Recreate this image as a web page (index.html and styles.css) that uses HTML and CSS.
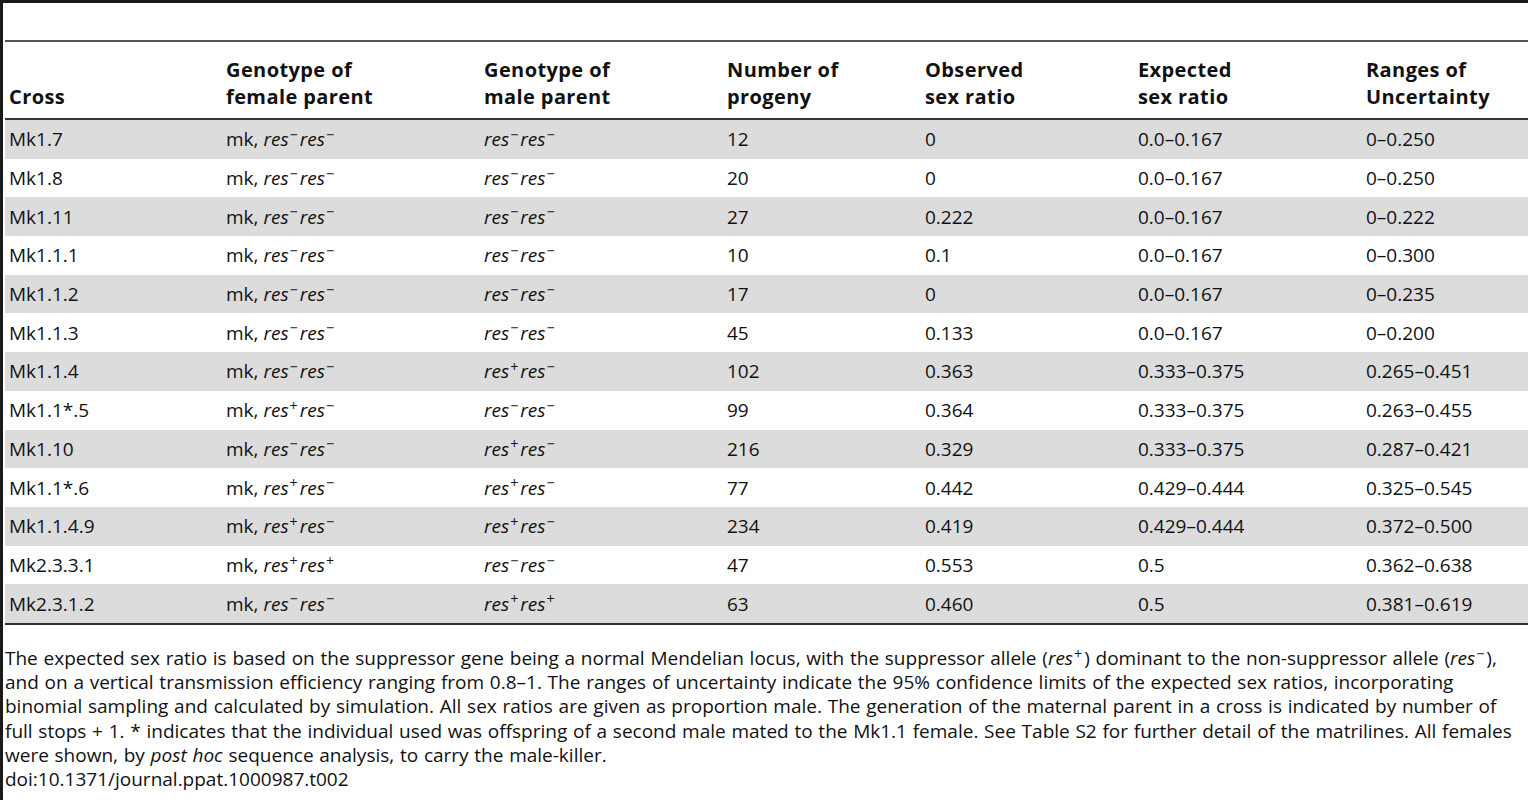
FILE: index.html
```html
<!DOCTYPE html>
<html lang="en">
<head>
  <meta charset="UTF-8" />
  <title>Table 2</title>
  <link rel="stylesheet" href="styles.css">
</head>
<body>
  <div class="frame">
    <table class="data">
      <colgroup>
        <col class="c1"><col class="c2"><col class="c3"><col class="c4"><col class="c5"><col class="c6"><col class="c7">
      </colgroup>
      <thead>
        <tr>
          <th>Cross</th>
          <th>Genotype of<br>female parent</th>
          <th>Genotype of<br>male parent</th>
          <th>Number of<br>progeny</th>
          <th>Observed<br>sex ratio</th>
          <th>Expected<br>sex ratio</th>
          <th>Ranges of<br>Uncertainty</th>
        </tr>
      </thead>
      <tbody>
        <tr><td>Mk1.7</td><td>mk, <i>res</i><sup>−</sup><i>res</i><sup>−</sup></td><td><i>res</i><sup>−</sup><i>res</i><sup>−</sup></td><td>12</td><td>0</td><td>0.0–0.167</td><td>0–0.250</td></tr>
        <tr><td>Mk1.8</td><td>mk, <i>res</i><sup>−</sup><i>res</i><sup>−</sup></td><td><i>res</i><sup>−</sup><i>res</i><sup>−</sup></td><td>20</td><td>0</td><td>0.0–0.167</td><td>0–0.250</td></tr>
        <tr><td>Mk1.11</td><td>mk, <i>res</i><sup>−</sup><i>res</i><sup>−</sup></td><td><i>res</i><sup>−</sup><i>res</i><sup>−</sup></td><td>27</td><td>0.222</td><td>0.0–0.167</td><td>0–0.222</td></tr>
        <tr><td>Mk1.1.1</td><td>mk, <i>res</i><sup>−</sup><i>res</i><sup>−</sup></td><td><i>res</i><sup>−</sup><i>res</i><sup>−</sup></td><td>10</td><td>0.1</td><td>0.0–0.167</td><td>0–0.300</td></tr>
        <tr><td>Mk1.1.2</td><td>mk, <i>res</i><sup>−</sup><i>res</i><sup>−</sup></td><td><i>res</i><sup>−</sup><i>res</i><sup>−</sup></td><td>17</td><td>0</td><td>0.0–0.167</td><td>0–0.235</td></tr>
        <tr><td>Mk1.1.3</td><td>mk, <i>res</i><sup>−</sup><i>res</i><sup>−</sup></td><td><i>res</i><sup>−</sup><i>res</i><sup>−</sup></td><td>45</td><td>0.133</td><td>0.0–0.167</td><td>0–0.200</td></tr>
        <tr><td>Mk1.1.4</td><td>mk, <i>res</i><sup>−</sup><i>res</i><sup>−</sup></td><td><i>res</i><sup>+</sup><i>res</i><sup>−</sup></td><td>102</td><td>0.363</td><td>0.333–0.375</td><td>0.265–0.451</td></tr>
        <tr><td>Mk1.1*.5</td><td>mk, <i>res</i><sup>+</sup><i>res</i><sup>−</sup></td><td><i>res</i><sup>−</sup><i>res</i><sup>−</sup></td><td>99</td><td>0.364</td><td>0.333–0.375</td><td>0.263–0.455</td></tr>
        <tr><td>Mk1.10</td><td>mk, <i>res</i><sup>−</sup><i>res</i><sup>−</sup></td><td><i>res</i><sup>+</sup><i>res</i><sup>−</sup></td><td>216</td><td>0.329</td><td>0.333–0.375</td><td>0.287–0.421</td></tr>
        <tr><td>Mk1.1*.6</td><td>mk, <i>res</i><sup>+</sup><i>res</i><sup>−</sup></td><td><i>res</i><sup>+</sup><i>res</i><sup>−</sup></td><td>77</td><td>0.442</td><td>0.429–0.444</td><td>0.325–0.545</td></tr>
        <tr><td>Mk1.1.4.9</td><td>mk, <i>res</i><sup>+</sup><i>res</i><sup>−</sup></td><td><i>res</i><sup>+</sup><i>res</i><sup>−</sup></td><td>234</td><td>0.419</td><td>0.429–0.444</td><td>0.372–0.500</td></tr>
        <tr><td>Mk2.3.3.1</td><td>mk, <i>res</i><sup>+</sup><i>res</i><sup>+</sup></td><td><i>res</i><sup>−</sup><i>res</i><sup>−</sup></td><td>47</td><td>0.553</td><td>0.5</td><td>0.362–0.638</td></tr>
        <tr><td>Mk2.3.1.2</td><td>mk, <i>res</i><sup>−</sup><i>res</i><sup>−</sup></td><td><i>res</i><sup>+</sup><i>res</i><sup>+</sup></td><td>63</td><td>0.460</td><td>0.5</td><td>0.381–0.619</td></tr>
      </tbody>
    </table>

    <p class="caption">The expected sex ratio is based on the suppressor gene being a normal Mendelian locus, with the suppressor allele (<i>res</i><sup>+</sup>) dominant to the non-suppressor allele (<i>res</i><sup>−</sup>),<br>
      and on a vertical transmission efficiency ranging from 0.8–1. The ranges of uncertainty indicate the 95% confidence limits of the expected sex ratios, incorporating<br>
      binomial sampling and calculated by simulation. All sex ratios are given as proportion male. The generation of the maternal parent in a cross is indicated by number of<br>
      full stops + 1. * indicates that the individual used was offspring of a second male mated to the Mk1.1 female. See Table S2 for further detail of the matrilines. All females<br>
      were shown, by <i>post hoc</i> sequence analysis, to carry the male-killer.</p>
    <p class="doi">doi:10.1371/journal.ppat.1000987.t002</p>
  </div>
</body>
</html>
```

FILE: styles.css
```css
body {
  margin: 0;
  font-family: 'Open Sans', sans-serif;
  color: #111;
  background-color: #fff;
}

.frame {
  width: 1523px;
  min-height: 797px;
  border-top: 3px solid #1a1a1a;
  border-left: 3px solid #1a1a1a;
  padding-left: 2px;
}

.data {
  width: 1523px;
  margin-top: 37px;
  border-collapse: collapse;
  table-layout: fixed;
  font-size: 19px;
  border-top: 2px solid #555;
  border-bottom: 2px solid #333;
}

.c1 { width: 217px; }
.c2 { width: 258px; }
.c3 { width: 243px; }
.c4 { width: 198px; }
.c5 { width: 213px; }
.c6 { width: 228px; }

.data th {
  text-align: left;
  vertical-align: bottom;
  font-size: 20px;
  font-weight: bold;
  letter-spacing: 0.4px;
  line-height: 27px;
  padding: 0 4px 8px 4px;
  height: 78px;
  box-sizing: border-box;
}

.data thead tr {
  border-bottom: 2px solid #333;
}

.data td {
  height: 38.7px;
  padding: 0 4px;
  white-space: nowrap;
}

.data tbody tr:nth-child(odd) {
  background-color: #dcdcdd;
}

sup {
  font-size: 0.75em;
  line-height: 0;
  vertical-align: 0.45em;
  margin: 0 2px 0 1px;
}

.caption {
  margin: 21px 0 0 0;
  font-size: 19px;
  line-height: 24.2px;
  word-spacing: 0.8px;
  white-space: nowrap;
}

.doi {
  margin: 0;
  font-size: 19px;
  line-height: 24.2px;
}
```
